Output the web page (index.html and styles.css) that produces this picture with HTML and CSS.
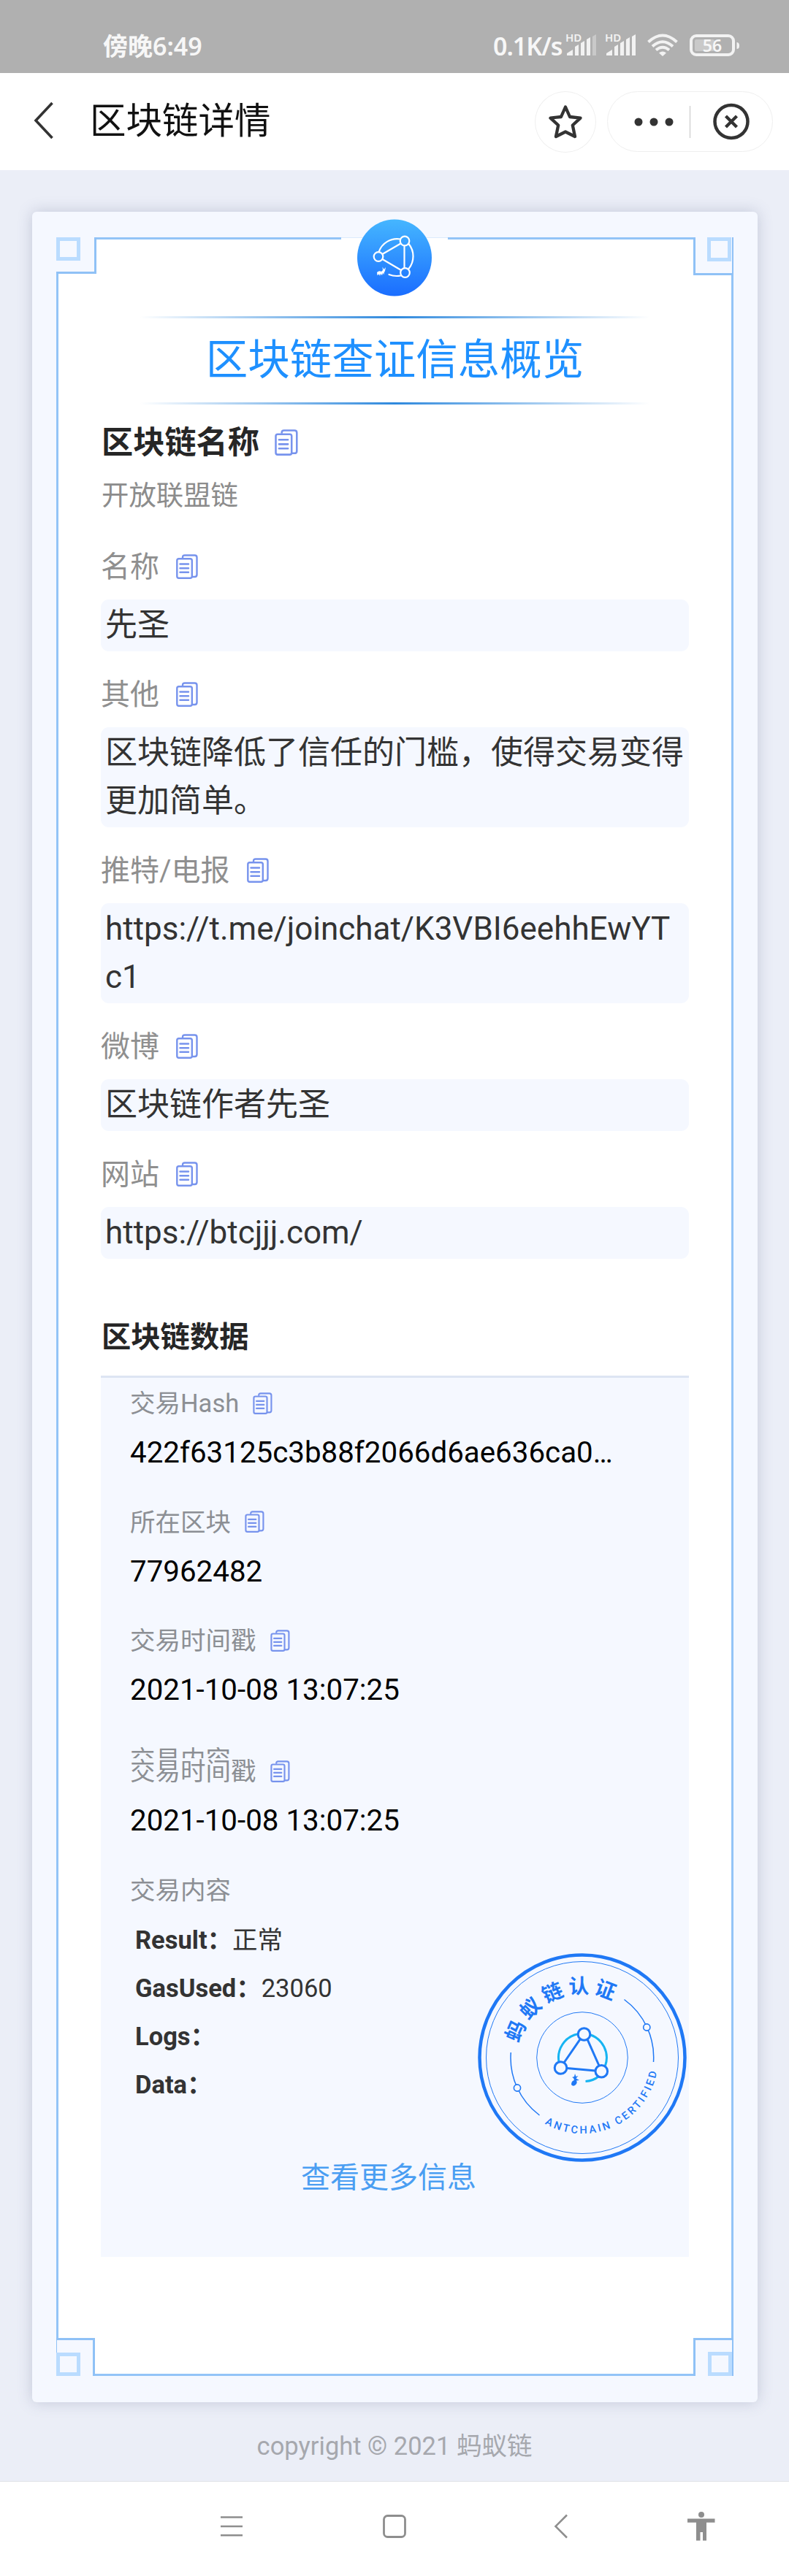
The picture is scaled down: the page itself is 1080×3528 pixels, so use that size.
FILE: index.html
```html
<!DOCTYPE html>
<html lang="zh-CN">
<head>
<meta charset="utf-8">
<title>区块链详情</title>
<link rel="stylesheet" href="styles.css">
</head>
<body>
<svg class="defs" width="0" height="0" aria-hidden="true">
  <symbol id="copy" viewBox="0 0 30 34">
    <path d="M9 5.500V4.500Q9 1.500 12 1.500H25.500Q28.500 1.500 28.500 4.500V28Q28.500 31 25.500 31H22" fill="none" stroke="#7793ed" stroke-width="2.400"/>
    <rect x="1.300" y="6.300" width="20.500" height="26.400" rx="2.500" fill="none" stroke="#7793ed" stroke-width="2.400"/>
    <path d="M5.500 13.500H17M5.500 19.200H17M5.500 24.800H17" stroke="#7793ed" stroke-width="2.500" stroke-linecap="round"/>
  </symbol>
</svg>

<header class="status">
  <span class="status-time">傍晚6:49</span>
  <span class="status-speed">0.1K/s</span>
  <svg class="status-icons" width="240" height="40" viewBox="0 -4 240 40">
    <g fill="#f2f2f2">
      <text x="0" y="12" class="hd">HD</text>
      <path d="M2 31V28L10 23V31ZM13 31V19L18 16V31ZM21 31V14L26 11V31ZM29 31V9L34 6V31Z"/>
      <path d="M37 31V5L42 2V31Z" fill="#c9c9c9"/>
      <text x="54" y="12" class="hd">HD</text>
      <path d="M56 31V28L64 23V31ZM67 31V19L72 16V31ZM75 31V14L80 11V31ZM83 31V9L88 6V31ZM91 31V5L96 2V31Z"/>
      <path d="M133 32L128 27.500Q133 23.500 138 27.500Z"/>
    </g>
    <g fill="none" stroke="#f2f2f2" stroke-width="4">
      <path d="M113.500 12.500Q133 -5.500 152.500 12.500M119 18.500Q133 6 147 18.500M124 23.500Q133 16 142 23.500"/>
      <rect x="172" y="4" width="58" height="26" rx="7"/>
    </g>
    <rect x="177" y="9" width="27" height="16" rx="2" fill="#c9c9c9"/>
    <path d="M234.500 13Q238 13 238 17.500Q238 22 234.500 22Z" fill="#f2f2f2"/>
    <text x="201" y="26" text-anchor="middle" class="battery-num">56</text>
  </svg>
</header>

<nav class="topbar">
  <svg class="back" width="32" height="54" viewBox="0 0 32 54"><path d="M28.500 3L6 27L28.500 51" fill="none" stroke="#333" stroke-width="3.600"/></svg>
  <h1 class="topbar-title">区块链详情</h1>
  <span class="fav"><svg width="50" height="50" viewBox="0 0 50 50"><path d="M25 4.500L31 18L45.500 19.600L34.800 29.500L38 45L25 38.500L12 45L15.200 29.500L4.500 19.600L19 18Z" fill="none" stroke="#333" stroke-width="4.300" stroke-linejoin="round"/></svg></span>
  <span class="capsule">
    <svg width="226" height="82" viewBox="0 0 226 82">
      <g fill="#333"><circle cx="42" cy="41" r="5.500"/><circle cx="63" cy="41" r="5.500"/><circle cx="84" cy="41" r="5.500"/></g>
      <path d="M112.500 19V63" stroke="#c4c4c4" stroke-width="1"/>
      <circle cx="169" cy="40.500" r="22.500" fill="none" stroke="#333" stroke-width="4.500"/>
      <path d="M161.500 33L176.500 48M176.500 33L161.500 48" stroke="#333" stroke-width="4.300"/>
    </svg>
  </span>
</nav>

<main class="page">
  <section class="card">
    <div class="frame">
      <i class="corner tl"></i><i class="corner tr"></i><i class="corner bl"></i><i class="corner br"></i>
      <i class="gap"></i>
      <svg class="logo" width="104" height="106" viewBox="0 0 104 106">
        <defs><linearGradient id="lg" x1="0" y1="0" x2="0" y2="1"><stop offset="0" stop-color="#45b6ff"/><stop offset="1" stop-color="#1a6dff"/></linearGradient></defs>
        <ellipse cx="52" cy="53" rx="51" ry="52.500" fill="url(#lg)"/>
        <g fill="none" stroke="#fff" stroke-width="2.200">
          <path d="M30.500 45A26.500 26.500 0 0 1 60 27.500M71.500 34A27 27 0 0 1 71.500 68M60.500 77.500Q52 79 44.500 76" stroke-linecap="round"/>
          <path d="M35.500 48L60.500 33.500M65.500 36.500V67M35.500 55L61 70"/>
          <circle cx="66" cy="30" r="6.300"/><circle cx="30" cy="51.500" r="6.300"/><circle cx="66.500" cy="73.500" r="6.300"/>
        </g>
        <path d="M28 73Q31 70 34 72L36 70L35.500 65.500L37.500 69L40 66L39 71Q37 73.500 38 76L36 74L35 77L33 75L32 78L31 75.500L28.500 77Z" fill="#fff"/>
      </svg>

      <h2 class="headline">区块链查证信息概览</h2>

      <h3 class="section">区块链名称<svg class="ic-l"><use href="#copy"/></svg></h3>
      <p class="sub">开放联盟链</p>

      <div class="field first"><div class="label">名称<svg class="ic"><use href="#copy"/></svg></div><div class="box">先圣</div></div>
      <div class="field"><div class="label">其他<svg class="ic"><use href="#copy"/></svg></div><div class="box">区块链降低了信任的门槛，使得交易变得更加简单。</div></div>
      <div class="field"><div class="label">推特/电报<svg class="ic"><use href="#copy"/></svg></div><div class="box">https://t.me/joinchat/K3VBI6eehhEwYTc1</div></div>
      <div class="field"><div class="label">微博<svg class="ic"><use href="#copy"/></svg></div><div class="box">区块链作者先圣</div></div>
      <div class="field"><div class="label">网站<svg class="ic"><use href="#copy"/></svg></div><div class="box">https://btcjjj.com/</div></div>

      <h3 class="section data-title">区块链数据</h3>
      <div class="panel">
        <div class="item"><div class="key">交易Hash<svg class="ic-s"><use href="#copy"/></svg></div><div class="val">422f63125c3b88f2066d6ae636ca0…</div></div>
        <div class="item"><div class="key">所在区块<svg class="ic-s"><use href="#copy"/></svg></div><div class="val">77962482</div></div>
        <div class="item"><div class="key">交易时间戳<svg class="ic-s"><use href="#copy"/></svg></div><div class="val">2021-10-08 13:07:25</div></div>
        <div class="key cut">交易内容</div>
        <div class="item"><div class="key">交易时间戳<svg class="ic-s"><use href="#copy"/></svg></div><div class="val">2021-10-08 13:07:25</div></div>
        <div class="key">交易内容</div>
        <ul class="content">
          <li><b>Result：</b>正常</li>
          <li><b>GasUsed：</b>23060</li>
          <li><b>Logs：</b></li>
          <li><b>Data：</b></li>
        </ul>
        <a class="more">查看更多信息</a>
        <svg class="stamp" width="288" height="288" viewBox="-144 -144 288 288">
          <defs>
            <path id="arcTop" d="M-85.900 -19A88 88 0 0 1 88 0"/>
            <path id="arcBottom" d="M-51.300 90.500A104 104 0 0 0 104 0"/>
          </defs>
          <g fill="none" stroke="#1f78f5">
            <circle r="140.500" stroke-width="4.500"/>
            <circle r="131.500" stroke-width="1"/>
            <circle r="62.300" stroke-width="1"/>
            <path d="M-97.700 -7A98 98 0 0 0 -58.500 79M57.500 -79.500A98 98 0 0 1 97.500 6" stroke-width="1.500"/>
            <g fill="#f5f8ff" stroke-width="1.600"><circle cx="-89" cy="41.500" r="4.600"/><circle cx="88.300" cy="-41.500" r="4.600"/></g>
            <path d="M-31.500 8A33 33 0 0 1 -5 -32.500M10 -31.500A33 33 0 0 1 31.500 11M22 26Q15 32 4.500 32.500" stroke="#16b4f2" stroke-width="3"/>
            <path d="M-3 -25L-25 7M7 -25L23 11M-21 14.500L18 18" stroke-width="3"/>
            <g fill="#f5f8ff" stroke-width="3"><circle cx="2.500" cy="-32" r="8.300"/><circle cx="-29.500" cy="14" r="8.300"/><circle cx="26.300" cy="18.700" r="8.300"/></g>
          </g>
          <path d="M-15 37Q-15 32 -11 31L-12 28L-14 27L-11 26L-10 22L-8.500 26L-5.500 25L-8.500 28.500L-4 31L-8 31.500Q-6 35 -10 38Q-13 40 -15 37Z" fill="#1f78f5"/>
          <text class="stamp-cn"><textPath href="#arcTop">蚂蚁链认证</textPath></text>
          <text class="stamp-en" textLength="197"><textPath href="#arcBottom" textLength="197">ANTCHAIN CERTIFIED</textPath></text>
        </svg>
      </div>
    </div>
  </section>
  <footer class="copyright">copyright © 2021 蚂蚁链</footer>
</main>

<nav class="sysbar">
  <svg width="32" height="40" viewBox="0 0 32 40"><path d="M1 7.500H31M1 20H31M1 32.300H31" stroke="#8e8e8e" stroke-width="2.600"/></svg>
  <svg class="home" width="32" height="40" viewBox="0 0 32 40"><rect x="1.500" y="5.500" width="29" height="29" rx="5" fill="none" stroke="#8e8e8e" stroke-width="2.800"/></svg>
  <svg class="prev" width="20" height="40" viewBox="0 0 20 40"><path d="M18 4.500L2.500 20L18 35.500" fill="none" stroke="#8e8e8e" stroke-width="2.600"/></svg>
  <svg class="person" width="38" height="40" viewBox="0 0 38 40"><path d="M0 9.500H37.500V14.800H26V39.500H21V28H17.500V39.500H12V14.800H0Z" fill="#8e8e8e"/><circle cx="19" cy="4" r="4" fill="#8e8e8e"/></svg>
</nav>
</body>
</html>
```
FILE: styles.css
```css
*, *::after { box-sizing: border-box; margin: 0; padding: 0; }

body {
  width: 1080px;
  background: #ebeef7;
  font-family: Roboto, "Noto Sans CJK SC", sans-serif;
  color: #333;
}

svg { display: block; flex: none; }
.defs { position: absolute; }

/* status bar */
.status {
  display: flex;
  height: 100px;
  padding: 0 0 0 141px;
  background: #b0b0b0;
  color: #f7f7f7;
  font: 600 34px/126px "Noto Sans", "Noto Sans CJK SC", sans-serif;
  overflow: hidden;
}
.status-time { width: 534px; }
.status-speed { width: 99px; letter-spacing: -1px; white-space: nowrap; }
.status-icons { margin-top: 41px; overflow: visible; }
.hd { font: 600 15px "Noto Sans", sans-serif; }
.battery-num { font: 600 23px "Noto Sans", sans-serif; fill: #f7f7f7; }

/* title bar */
.topbar {
  display: flex;
  align-items: center;
  height: 133px;
  padding: 0 22px 0 43px;
  background: #fff;
}
.back { margin-top: -3px; }
.topbar-title {
  width: 609px;
  margin: -1px 0 0 48px;
  color: #111;
  font-size: 49.5px;
  font-weight: 400;
  line-height: 70px;
}
.fav {
  display: flex;
  align-items: center;
  justify-content: center;
  width: 84px;
  height: 84px;
  margin: 0 15px 0 1px;
  border: 1px solid #efefef;
  border-radius: 50%;
}
.capsule {
  width: 227px;
  height: 83px;
  border: 1px solid #efefef;
  border-radius: 42px;
}

/* certificate card */
.page { height: 3165px; padding-top: 57px; }
.card {
  width: 993px;
  height: 3000px;
  margin-left: 44px;
  padding: 35px 33px;
  background: #f5f8ff;
  border-radius: 6px;
  box-shadow: 0 0 20px rgba(90, 100, 140, .28);
}
.frame {
  position: relative;
  width: 927px;
  height: 2929px;
  padding: 105px 58px 0;
  background: #fff;
  border: 3px solid #93c4f7;
}
.corner {
  position: absolute;
  width: 55px;
  height: 52px;
  background: #f5f8ff;
  border: 0 solid #8fc1f6;
}
.corner::after {
  content: "";
  position: absolute;
  width: 33px;
  height: 32px;
  border: 5px solid #badcff;
}
.tl { left: -3px; top: -3px; height: 50px; border-width: 0 3px 3px 0; }
.tl::after { left: 0; top: 0; }
.tr { right: -3px; top: -3px; border-width: 0 2px 3px 3px; }
.tr::after { right: 1px; top: 0; height: 33px; }
.bl { left: -3px; bottom: -3px; width: 53px; border-width: 3px 3px 0 1px; }
.bl::after { left: -1px; bottom: 0; }
.br { right: -3px; bottom: -3px; border-width: 3px 2px 0 3px; }
.br::after { right: 0; bottom: 0; height: 33px; }
.gap {
  position: absolute;
  left: 387px;
  top: -3px;
  width: 146px;
  height: 4px;
  border-top: 1px solid #dcebfc;
  background: #fff;
}
.logo { position: absolute; left: 408px; top: -28px; }

.headline {
  height: 121px;
  color: #1e90ff;
  font-size: 57.5px;
  font-weight: 400;
  line-height: 121px;
  text-align: center;
  background:
    linear-gradient(90deg, #fff 54px, #2f89dd 50%, #fff 751px) top / 100% 3px no-repeat,
    linear-gradient(90deg, #fff 54px, #2f89dd 50%, #fff 751px) bottom / 100% 3px no-repeat;
}
.section {
  display: flex;
  align-items: center;
  height: 50px;
  margin-top: 28px;
  padding-left: 1px;
  color: #262626;
  font-size: 43.2px;
  line-height: 52px;
}
.ic-l { width: 32px; height: 36px; margin: -2px 0 0 21px; }
.sub { height: 49px; margin-top: 22px; padding-left: 1px; color: #8c8c8c; font-size: 37.4px; line-height: 50px; }

.field { margin-top: 34.5px; }
.field.first { margin-top: 48.5px; }
.label {
  display: flex;
  align-items: center;
  height: 50px;
  margin-bottom: 19.5px;
  color: #8f8f8f;
  font-size: 40px;
  line-height: 50px;
}
.ic { width: 30px; height: 34px; margin: -2px 0 0 23px; }
.box {
  min-height: 71px;
  padding: 2px 7px 3px 6px;
  background: #f5f8ff;
  border-radius: 11px;
  font-size: 44px;
  line-height: 66px;
  word-break: break-all;
}

.data-title { margin-top: 83px; font-size: 40.3px; line-height: 50px; }
.panel {
  position: relative;
  height: 1207px;
  margin-top: 27px;
  padding: 12px 40px 0;
  border-top: 3px solid #dde5f3;
  background: #f5f8ff;
}
.item { margin-bottom: 41.7px; }
.key { display: flex; align-items: center; height: 46px; color: #8c8f94; font-size: 34.5px; line-height: 46px; }
.ic-s { width: 27px; height: 30px; margin: -1px 0 0 19px; }
.val { margin-top: 15px; color: #000; font-size: 40.3px; line-height: 60px; white-space: nowrap; }
.cut { display: block; height: 21px; margin-bottom: -5px; overflow: hidden; }
.content { margin: 12px 0 64px 7px; list-style: none; font-size: 34.5px; line-height: 66px; }
.more { display: block; width: 708px; color: #4a9ef2; font-size: 40px; line-height: 62px; text-align: center; }
.stamp { position: absolute; left: 515px; top: 786.5px; }
.stamp-cn { font: 700 28px "Noto Sans CJK SC", sans-serif; letter-spacing: 5.4px; fill: #1f78f5; }
.stamp-en { font: 500 14.5px Roboto, sans-serif; fill: #1f78f5; }

.copyright { margin-top: 30px; color: #a6a8ae; font-size: 34.5px; line-height: 60px; text-align: center; }

/* system navigation */
.sysbar {
  display: flex;
  height: 130px;
  padding: 41px 0 0 301px;
  border-top: 1px solid #e2e4e8;
  background: #fff;
}
.home { margin-left: 191px; }
.prev { margin-left: 202px; }
.person { margin-left: 163px; }
```
